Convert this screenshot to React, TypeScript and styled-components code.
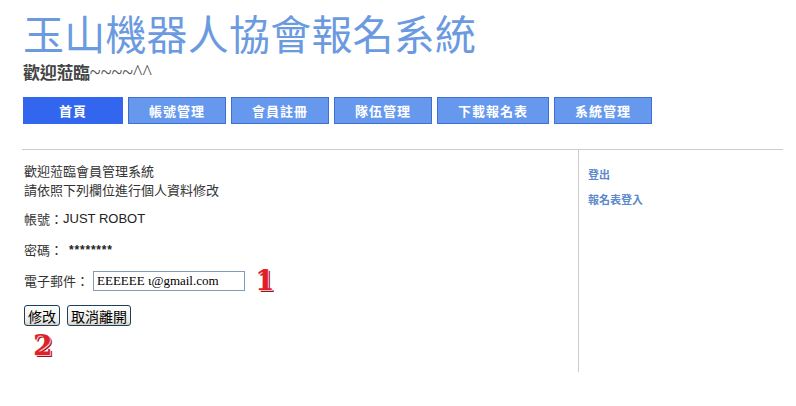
import styled, { createGlobalStyle } from "styled-components";

const GlobalStyle = createGlobalStyle`
    html, body {
        margin: 0;
        padding: 0;
        background: #ffffff;
    }
    body {
        font-family: "Liberation Sans", "Noto Sans CJK TC", sans-serif;
    }
`;

const NAV_ITEMS = [
    { label: "首頁", width: 100 },
    { label: "帳號管理", width: 98 },
    { label: "會員註冊", width: 98 },
    { label: "隊伍管理", width: 98 },
    { label: "下載報名表", width: 112 },
    { label: "系統管理", width: 98 },
];

const App = () => {
    return (
        <Page>
            <GlobalStyle />
            <Header>
                <Title>玉山機器人協會報名系統</Title>
                <Welcome>
                    歡迎蒞臨<span className="tilde">~~~~^^</span>
                </Welcome>
            </Header>
            <Nav>
                {NAV_ITEMS.map((v, i) => (
                    <NavButton key={i} $active={i === 0} $width={v.width}>
                        {v.label}
                    </NavButton>
                ))}
            </Nav>
            <Body>
                <Main>
                    <Intro>
                        <p>歡迎蒞臨會員管理系統</p>
                        <p>請依照下列欄位進行個人資料修改</p>
                    </Intro>
                    <Field>
                        帳號：<span className="en">JUST ROBOT</span>
                    </Field>
                    <Field>
                        密碼：<span className="pw">********</span>
                    </Field>
                    <Field>
                        電子郵件：
                        <EmailInput type="text" defaultValue="EEEEEE ι@gmail.com" readOnly />
                        <StepNo $left={10}>1</StepNo>
                    </Field>
                    <Buttons>
                        <XpButton>修改</XpButton>
                        <XpButton>取消離開</XpButton>
                    </Buttons>
                    <StepNo $left={9}>2</StepNo>
                </Main>
                <Side>
                    <SideLink>登出</SideLink>
                    <SideLink>報名表登入</SideLink>
                </Side>
            </Body>
        </Page>
    );
};

const Page = styled.div`
    width: 796px;
    height: 406px;
    overflow: hidden;
    padding-top: 14px;
    box-sizing: border-box;
`;

const Header = styled.header`
    padding-left: 23px;
`;

const Title = styled.h1`
    margin: 0;
    font-family: "Liberation Serif", "Noto Sans CJK TC", serif;
    font-weight: 400;
    font-size: 41px;
    line-height: 44px;
    letter-spacing: 0.2px;
    color: #6b9ae0;
`;

const Welcome = styled.div`
    margin-top: 4px;
    font-family: "Noto Sans CJK TC", sans-serif;
    font-weight: 700;
    font-size: 17px;
    line-height: 20px;
    color: #444444;
    letter-spacing: -0.3px;

    .tilde{
        font-weight: 400;
        font-size: 20px;
        letter-spacing: 0;
        color: #555555;
        font-family: "Liberation Serif", serif;
    }
`;

const Nav = styled.nav`
    display: flex;
    gap: 5px;
    padding-left: 23px;
    margin-top: 15px;
`;

const NavButton = styled.div<{ $active: boolean; $width: number }>`
    width: ${(p) => p.$width}px;
    height: 27px;
    box-sizing: border-box;
    display: flex;
    align-items: center;
    justify-content: center;
    background: ${(p) => (p.$active ? "#3366ee" : "#6699ee")};
    border: 1px solid ${(p) => (p.$active ? "#3366ee" : "#3f6fcf")};
    color: #ffffff;
    font-family: "Noto Sans CJK TC", sans-serif;
    font-weight: 700;
    font-size: 13px;
    letter-spacing: 1px;
`;

const Body = styled.section`
    margin: 25px 0 0 22px;
    width: 761px;
    border-top: 1px solid #cccccc;
    display: grid;
    grid-template-columns: 556px 1fr;
    align-items: start;
`;

const Main = styled.div`
    padding: 11px 0 0 2px;
    font-family: "Noto Sans CJK TC", sans-serif;
    font-size: 13px;
    color: #333333;
`;

const Intro = styled.div`
    p{
        margin: 0;
        line-height: 19px;
    }
`;

const Field = styled.div`
    display: flex;
    align-items: center;
    height: 20px;
    margin-top: 11px;
    line-height: 20px;

    &:nth-of-type(2){
        margin-top: 10px;
    }

    .en{
        font-family: "Liberation Sans", sans-serif;
        font-size: 13px;
        color: #222222;
    }

    .pw{
        margin-left: 6px;
        font-family: "Liberation Sans", sans-serif;
        font-weight: 700;
        font-size: 12px;
        letter-spacing: 0.8px;
        color: #222222;
    }
`;

const EmailInput = styled.input`
    width: 152px;
    height: 20px;
    box-sizing: border-box;
    margin: 0 0 0 4px;
    padding: 0 3px;
    border: 1px solid #7f9db9;
    font-family: "Liberation Serif", serif;
    font-size: 13px;
    color: #000000;
    outline: none;
`;

const StepNo = styled.div<{ $left: number }>`
    margin-left: ${(p) => p.$left}px;
    font-family: "DejaVu Serif", serif;
    font-weight: 700;
    font-size: 28px;
    line-height: 22px;
    height: 22px;
    color: #e01f2a;
    text-shadow: 1px 1px 0 #f4c0c0, 2px 2px 0 #9a1018;
`;

const Buttons = styled.div`
    display: flex;
    gap: 7px;
    margin-top: 14px;
    margin-bottom: 9px;
`;

const XpButton = styled.button`
    height: 21px;
    padding: 0 3px;
    border: 1px solid #1c3f5e;
    border-radius: 3px;
    background: linear-gradient(#ffffff, #ecebe6 80%, #d6d0c5);
    font-family: "Noto Sans CJK TC", sans-serif;
    font-size: 14px;
    line-height: 18px;
    color: #000000;
`;

const Side = styled.aside`
    border-left: 1px solid #cccccc;
    height: 222px;
    padding: 16px 0 0 9px;
    box-sizing: border-box;
    display: flex;
    flex-direction: column;
    gap: 9px;
`;

const SideLink = styled.a`
    font-family: "Noto Sans CJK TC", sans-serif;
    font-weight: 700;
    font-size: 11px;
    line-height: 16px;
    color: #5b89cc;
`;

export default App;
